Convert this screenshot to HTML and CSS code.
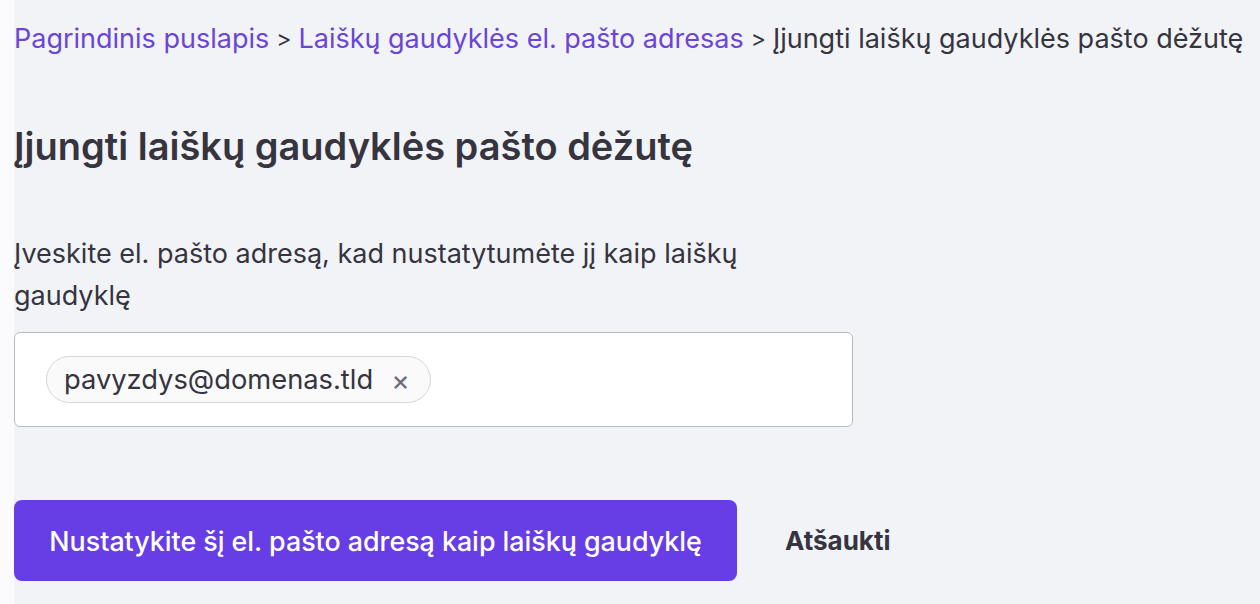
FILE: index.html
```html
<!DOCTYPE html>
<html lang="lt">
<head>
<meta charset="utf-8">
<title>Įjungti laiškų gaudyklės pašto dėžutę</title>
<link rel="stylesheet" href="styles.css">
</head>
<body>
<div class="page">
  <nav class="crumbs">
    <a class="crumb-link" href="#">Pagrindinis puslapis</a>
    <span class="sep">&gt;</span>
    <a class="crumb-link" href="#">Laiškų gaudyklės el. pašto adresas</a>
    <span class="sep">&gt;</span>
    <span class="crumb-current">Įjungti laiškų gaudyklės pašto dėžutę</span>
  </nav>
  <h1 class="title">Įjungti laiškų gaudyklės pašto dėžutę</h1>
  <p class="desc">Įveskite el. pašto adresą, kad nustatytumėte jį kaip laiškų gaudyklę</p>
  <div class="field">
    <span class="chip">pavyzdys@domenas.tld <span class="chip-x">×</span></span>
  </div>
  <div class="actions">
    <button class="btn-primary">Nustatykite šį el. pašto adresą kaip laiškų gaudyklę</button>
    <button class="btn-text">Atšaukti</button>
  </div>
</div>
</body>
</html>
```
FILE: styles.css
```css
html, body { margin: 0; padding: 0; }
body {
  background: #fbfbfd;
  font-family: Inter, "DejaVu Sans", sans-serif;
  color: #35343f;
}
.page {
  margin-left: 14px;
  background: #f2f3f7;
  height: 604px;
  overflow: hidden;
}
.crumbs {
  padding-top: 22px;
  font-size: 27px;
  line-height: 34px;
  display: flex;
  gap: 7px;
  white-space: nowrap;
}
.crumb-link { color: #6a45d6; text-decoration: none; }
.sep { color: #35343f; font-size: 23px; }
.crumb-current { color: #35343f; }
.title {
  margin: 0;
  margin-top: 68px;
  font-size: 38px;
  line-height: 44px;
  font-weight: 600;
  color: #35343f;
}
.desc {
  margin: 0;
  margin-top: 65px;
  width: 780px;
  font-size: 27px;
  line-height: 42px;
}
.field {
  margin-top: 15px;
  width: 839px;
  height: 95px;
  box-sizing: border-box;
  border: 1px solid #b9b9c2;
  border-radius: 6px;
  background: #fff;
  display: flex;
  align-items: center;
  padding-left: 31px;
}
.chip {
  display: inline-flex;
  align-items: center;
  gap: 18px;
  height: 47px;
  box-sizing: border-box;
  padding: 0 20px 0 17px;
  border: 1px solid #d5d5dc;
  border-radius: 24px;
  background: #fafafa;
  font-size: 27.3px;
}
.chip-x { color: #6d6b7e; font-size: 28px; }
.actions {
  margin-top: 73px;
  display: flex;
  align-items: center;
  gap: 48px;
}
.btn-primary {
  width: 723px;
  height: 81px;
  border: 0;
  border-radius: 8px;
  background: #673de6;
  color: #fff;
  font-family: inherit;
  font-size: 26.8px;
  font-weight: 500;
}
.btn-text {
  border: 0;
  background: none;
  color: #35343f;
  font-family: inherit;
  font-size: 26px;
  font-weight: 700;
  padding: 0;
}
```
